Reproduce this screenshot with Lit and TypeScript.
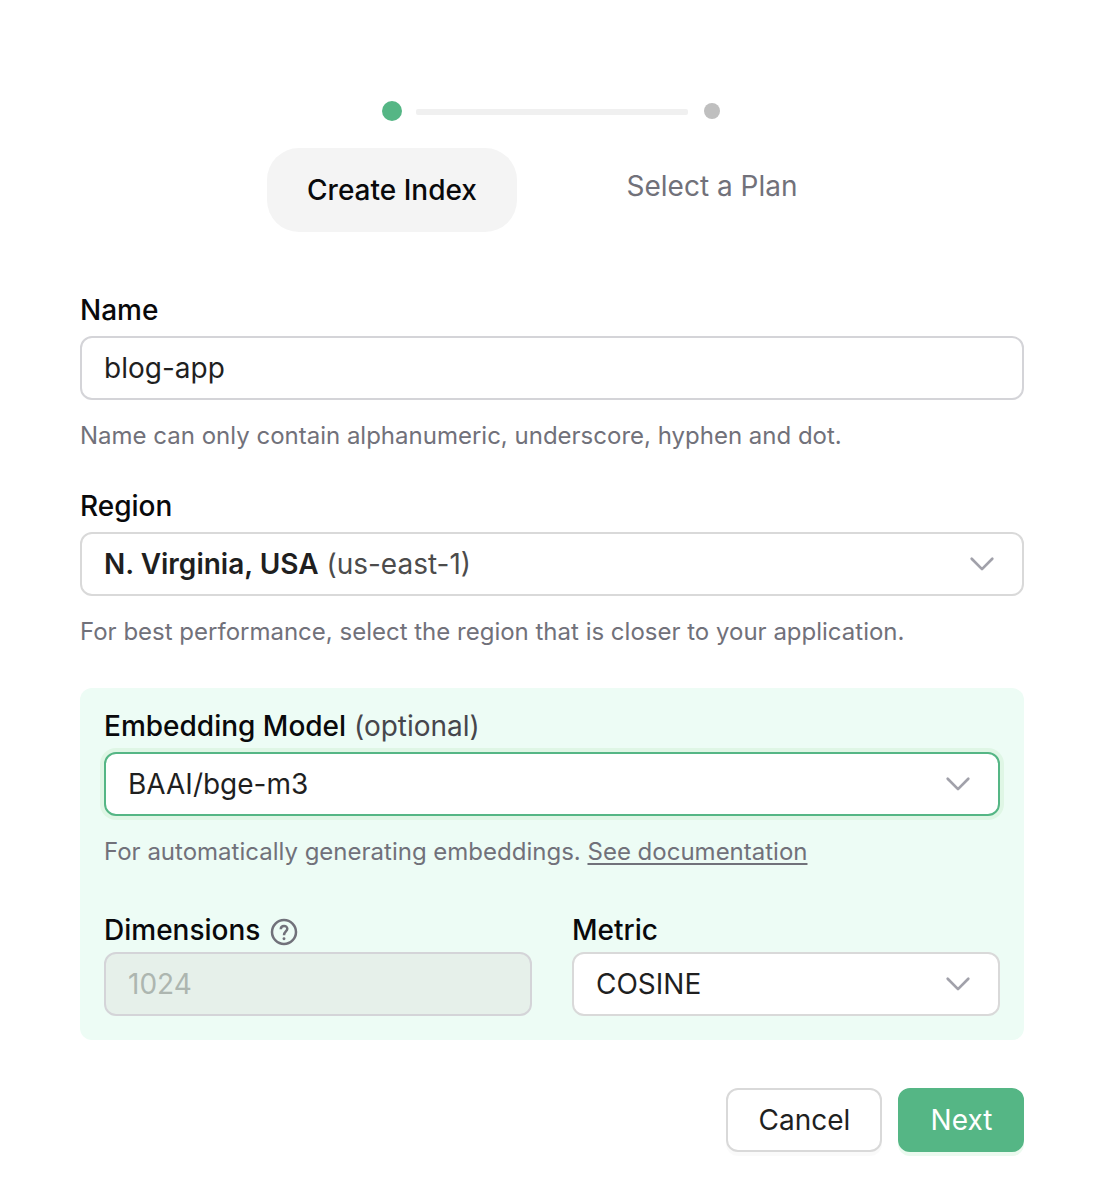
import { LitElement, html, css } from "lit";
import { customElement } from "lit/decorators.js";

const chevron = html`<svg class="chev" width="26" height="16" viewBox="0 0 26 16" fill="none" stroke="#a1a1aa" stroke-width="2.7" stroke-linecap="round" stroke-linejoin="round"><path d="M2.7 2.8 13 13.1 23.3 2.8"/></svg>`;

@customElement("app-root")
export class AppRoot extends LitElement {
  static styles = css`
    :host { display: block; }
    * { box-sizing: border-box; }
    .page { width: 1102px; height: 1190px; background: #fff; padding: 100px 78px 0 80px; font: 28px/44px Inter, sans-serif; letter-spacing: 0; color: #1f1f1f; }
    .steps { display: flex; margin-left: 152px; height: 132px; }
    .step { width: 320px; display: flex; flex-direction: column; align-items: center; }
    .rail { height: 22px; width: 100%; display: grid; grid-template-columns: 150px 20px 150px; align-items: center; }
    .dot { width: 20px; height: 20px; border-radius: 50%; background: #55b685; grid-column: 2; }
    .dot.small { width: 16px; height: 16px; background: #bfbfbf; justify-self: center; }
    .line { width: 272px; height: 6px; margin-left: 14px; margin-top: 2px; background: #f0f0f0; border-radius: 2px; }
    .tab { margin-top: 26px; width: 250px; height: 84px; border-radius: 32px; background: #f4f4f4; color: #09090b; display: grid; place-items: center; font-weight: 500; }
    .tab.idle { background: none; color: #71717a; font-weight: 400; height: 76px; }
    .label { height: 44px; font-weight: 500; color: #09090b; display: flex; align-items: center; white-space: pre; }
    .label span { font-weight: 400; color: #46464c; }
    .muted { color: #4c4c4c; }
    .name { margin-top: 56px; }
    .field { height: 64px; margin-top: 4px; border: 2px solid #d9d9d9; border-radius: 12px; background: #fff; padding: 0 27px 0 22px; display: flex; align-items: center; white-space: pre; }
    .field.input { border-color: #d4d4d8; }
    .field .chev { margin-left: auto; }
    .hint { font-size: 24px; line-height: 40px; height: 40px; margin-top: 16px; color: #71717a; white-space: nowrap; }
    .region { margin-top: 28px; }
    b { font-weight: 600; }
    .panel { margin-top: 36px; height: 352px; background: #edfcf5; border-radius: 12px; padding: 16px 24px 0; }
    .field.active { border-color: #55b685; box-shadow: 0 0 0 4px #dff6e5; }
    .cols { display: grid; grid-template-columns: 428px 428px; gap: 40px; margin-top: 36px; }
    .cols .field { margin-top: 0; }
    .field.disabled { background: #e6f0ea; color: #adb6b0; }
    .help { margin: 4px 0 0 10px; }
    u { text-decoration-thickness: 1.5px; text-underline-offset: 3px; }
    .actions { display: flex; justify-content: flex-end; gap: 16px; margin-top: 48px; }
    .btn { height: 64px; border: 2px solid #d9d9d9; border-radius: 12px; background: #fff; display: grid; place-items: center; width: 156px; padding-left: 1px; box-shadow: 0 4px 0 rgba(0,0,0,.02); }
    .next { width: 126px; background: #55b685; border-color: #55b685; color: #fff; box-shadow: 0 4px 0 #ebfaef; }
  `;

  render() {
    return html`<main class="page">
      <div class="steps">
        <div class="step"><div class="rail"><i class="dot"></i><i class="line"></i></div><div class="tab">Create Index</div></div>
        <div class="step"><div class="rail"><i class="dot small"></i></div><div class="tab idle">Select a Plan</div></div>
      </div>
      <div class="label name">Name</div>
      <div class="field input">blog-app</div>
      <div class="hint">Name can only contain alphanumeric, underscore, hyphen and dot.</div>
      <div class="label region">Region</div>
      <div class="field"><b>N. Virginia, USA</b><span class="muted"> (us-east-1)</span>${chevron}</div>
      <div class="hint">For best performance, select the region that is closer to your application.</div>
      <section class="panel">
        <div class="label">Embedding Model<span> (optional)</span></div>
        <div class="field active">BAAI/bge-m3${chevron}</div>
        <div class="hint">For automatically generating embeddings. <u>See documentation</u></div>
        <div class="cols">
          <div><div class="label">Dimensions<svg class="help" width="28" height="28" viewBox="0 0 28 28" fill="none" stroke="#71717a" stroke-width="2.5"><circle cx="14" cy="14" r="12"/><path d="M10.8 11.2C10.8 6.8 17.3 7 17.3 10.8 17.3 13.4 14 13.6 14 17.2"/><circle cx="14" cy="20.8" r="1.45" fill="#71717a" stroke="none"/></svg></div><div class="field input disabled">1024</div></div>
          <div><div class="label">Metric</div><div class="field">COSINE${chevron}</div></div>
        </div>
      </section>
      <div class="actions"><div class="btn">Cancel</div><div class="btn next">Next</div></div>
    </main>`;
  }
}
